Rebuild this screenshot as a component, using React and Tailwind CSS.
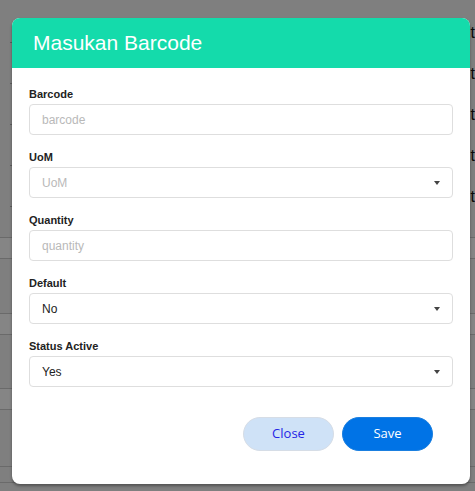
import React from "react";

const fields = [
  { label: "Barcode", placeholder: "barcode" },
  { label: "UoM", placeholder: "UoM", select: true },
  { label: "Quantity", placeholder: "quantity" },
  { label: "Default", value: "No", select: true },
  { label: "Status Active", value: "Yes", select: true },
];

const Caret = () => (
  <span className="w-0 h-0 border-l-[3.5px] border-r-[3.5px] border-t-[4px] border-l-transparent border-r-transparent border-t-[#444]" />
);

const Field = ({ field, last }) => (
  <div className={last ? "" : "mb-[16px]"}>
    <div className="text-[11px] leading-[12px] font-bold text-[#222] mb-[4px]">{field.label}</div>
    <div className="h-[31px] border border-[#dedede] rounded-[4px] flex items-center justify-between pl-[12px] pr-[12px] bg-white">
      {field.value ? (
        <span className="text-[12px] text-[#222]">{field.value}</span>
      ) : (
        <span className="text-[12px] text-[#b9b9b9]">{field.placeholder}</span>
      )}
      {field.select && <Caret />}
    </div>
  </div>
);

export default function App() {
  return (
    <div className="relative h-[491px] w-[475px] overflow-hidden bg-[#7f7f7f] font-['Liberation_Sans',Arial,sans-serif]">
      {/* page behind the overlay */}
      <div className="flex flex-col pt-[12px]">
        {[0, 1, 2, 3, 4].map((i) => (
          <div key={i} className="h-[41px] flex items-center justify-between">
            <div className="ml-[10px] mt-[20px] w-[4px] h-px bg-[#5e5e5e]" />
            <span className="text-[16px] leading-none text-[#0a0a0a] mr-0">t</span>
          </div>
        ))}
        <div className="h-[20px]" />
        <div className="h-[22px] bg-[#858585] border-y border-[#6a6a6a]" />
        <div className="h-[54px]" />
        <div className="h-[22px] bg-[#858585] border-y border-[#6a6a6a]" />
        <div className="h-[53px]" />
        <div className="h-[22px] bg-[#858585] border-y border-[#6a6a6a]" />
        <div className="h-[57px] border-b border-[#6a6a6a]" />
        <div className="h-[16px] border-b border-[#6a6a6a]" />
      </div>

      {/* modal */}
      <div className="absolute left-[12px] top-[18px] w-[458px] bg-white rounded-[8px] shadow-[0_2px_3px_rgba(0,0,0,0.35)]">
        <div className="h-[50px] bg-[#14dbab] rounded-t-[8px] flex items-center pl-[21px]">
          <h1 className="text-[21px] text-white">Masukan Barcode</h1>
        </div>
        <div className="px-[17px] pt-[20px]">
          {fields.map((f, i) => (
            <Field key={f.label} field={f} last={i === fields.length - 1} />
          ))}
        </div>
        <div className="flex justify-end gap-[8px] pr-[37px] pt-[30px] pb-[33px] font-['Open_Sans',sans-serif]">
          <button className="w-[91px] h-[34px] rounded-full bg-[#cfe2f7] border border-[#d6dde6] text-[13px] text-[#2525e6]">
            Close
          </button>
          <button className="w-[91px] h-[34px] rounded-full bg-[#0073e6] border border-[#1a7fe0] text-[13px] text-white">
            Save
          </button>
        </div>
      </div>
    </div>
  );
}
